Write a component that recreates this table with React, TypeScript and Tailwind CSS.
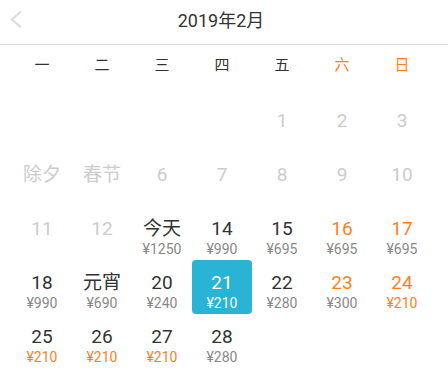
import React from "react";

type Cell = {
  label?: string;
  price?: string;
  disabled?: boolean;
  weekend?: boolean;
  low?: boolean;
  selected?: boolean;
};

const rows: Cell[][] = [
  [{}, {}, {}, {}, { label: "1", disabled: true }, { label: "2", disabled: true }, { label: "3", disabled: true }],
  [
    { label: "除夕", disabled: true },
    { label: "春节", disabled: true },
    { label: "6", disabled: true },
    { label: "7", disabled: true },
    { label: "8", disabled: true },
    { label: "9", disabled: true },
    { label: "10", disabled: true },
  ],
  [
    { label: "11", disabled: true },
    { label: "12", disabled: true },
    { label: "今天", price: "¥1250" },
    { label: "14", price: "¥990" },
    { label: "15", price: "¥695" },
    { label: "16", price: "¥695", weekend: true },
    { label: "17", price: "¥695", weekend: true },
  ],
  [
    { label: "18", price: "¥990" },
    { label: "元宵", price: "¥690" },
    { label: "20", price: "¥240" },
    { label: "21", price: "¥210", selected: true },
    { label: "22", price: "¥280" },
    { label: "23", price: "¥300", weekend: true },
    { label: "24", price: "¥210", weekend: true, low: true },
  ],
  [
    { label: "25", price: "¥210", low: true },
    { label: "26", price: "¥210", low: true },
    { label: "27", price: "¥210", low: true },
    { label: "28", price: "¥280" },
    {},
    {},
    {},
  ],
];

const weekdays = ["一", "二", "三", "四", "五", "六", "日"];

function DayCell({ c }: { c: Cell }) {
  if (!c.label) return <div className="h-[54px]" />;
  let numColor = "text-[#333333]";
  if (c.disabled) numColor = "text-[#cccccc]";
  else if (c.weekend) numColor = "text-[#ff7f1f]";
  let priceColor = c.low ? "text-[#ff7f1f]" : "text-[#888888]";
  if (c.selected) {
    numColor = "text-white";
    priceColor = "text-white";
  }
  return (
    <div
      className={
        "h-[54px] flex flex-col items-center pt-[11px] " +
        (c.selected ? "bg-[#29b4d5] rounded-[4px]" : "")
      }
    >
      <div className={"text-[19px] leading-[24px] " + numColor}>{c.label}</div>
      {c.price && (
        <div className={"text-[14px] leading-[17px] " + priceColor}>{c.price}</div>
      )}
    </div>
  );
}

export default function App() {
  return (
    <div
      className="w-[448px] h-[388px] bg-white overflow-hidden"
      style={{ fontFamily: 'Roboto, "Noto Sans CJK SC", sans-serif' }}
    >
      <div className="relative h-[45px] flex items-center justify-center pr-[6px] pb-[4px] border-b border-[#e2e2e2]">
        <svg
          className="absolute left-[9px] top-[10px]"
          width="14"
          height="19"
          viewBox="0 0 14 19"
          fill="none"
        >
          <path d="M12 1.5 L3 9.5 L12 17.5" stroke="#dddddd" strokeWidth="2.2" />
        </svg>
        <span className="text-[18px] text-[#333333]">2019年2月</span>
      </div>
      <div className="grid grid-cols-[repeat(7,60px)] pl-[12px] h-[40px] items-center">
        {weekdays.map((w, i) => (
          <div
            key={w}
            className={
              "text-center text-[15px] leading-[20px] " +
              (i >= 5 ? "text-[#ff7f1f]" : "text-[#333333]")
            }
          >
            {w}
          </div>
        ))}
      </div>
      <div className="mt-[13px] pl-[12px] grid grid-cols-[repeat(7,60px)]">
        {rows.flat().map((c, i) => (
          <DayCell key={i} c={c} />
        ))}
      </div>
    </div>
  );
}
